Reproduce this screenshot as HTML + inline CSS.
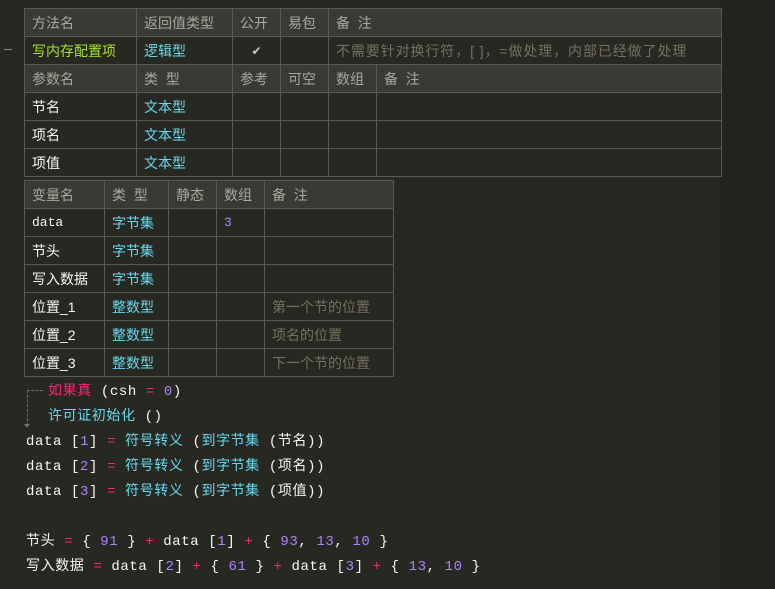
<!DOCTYPE html>
<html><head><meta charset="utf-8"><style>
body{margin:0;width:775px;height:589px;background:#272822;position:relative;overflow:hidden;font-family:"Liberation Mono","Noto Sans CJK SC",monospace;font-size:13.5px;color:#f8f8f2}
.rd{position:absolute;left:720px;top:0;width:55px;height:589px;background:#22221e}
table{position:absolute;border-collapse:collapse;table-layout:fixed}
td{border:1px solid #5b5a52;height:27px;padding:0 0 0 7px;white-space:nowrap;overflow:hidden;font-family:"Liberation Sans","Noto Sans CJK SC",sans-serif;font-size:14px}
tr.h td{background:#3a3933;color:#a9a89d}
.c{color:#66d9ef}.g{color:#a6e22e}.p{color:#ae81ff}.r{color:#f92672}.m{color:#75715e}.w{color:#f8f8f2}
.mono{font-family:"Liberation Mono","Noto Sans CJK SC",monospace;font-size:13px}
.ln{position:absolute;left:26px;white-space:pre;line-height:18px;font-size:14px;letter-spacing:0.6px}
</style></head><body>
<div class="rd"></div>
<div style="position:absolute;left:4px;top:49px;width:8px;height:1px;background:#8a8a80"></div>
<table style="left:24px;top:8px;width:697px">
<colgroup><col style="width:112px"><col style="width:96px"><col style="width:48px"><col style="width:48px"><col style="width:393px"></colgroup>
<tr class="h"><td>方法名</td><td>返回值类型</td><td>公开</td><td>易包</td><td>备&nbsp;&nbsp;注</td></tr>
<tr><td class="g">写内存配置项</td><td class="c">逻辑型</td><td style="text-align:center;padding:0;color:#c8c8c0;font-size:12px">✔</td><td></td><td class="m" style="letter-spacing:0.9px">不需要针对换行符，[ ]，=做处理，内部已经做了处理</td></tr>
</table>
<table style="left:24px;top:64px;width:697px">
<colgroup><col style="width:112px"><col style="width:96px"><col style="width:48px"><col style="width:48px"><col style="width:48px"><col style="width:345px"></colgroup>
<tr class="h"><td>参数名</td><td>类&nbsp;&nbsp;型</td><td>参考</td><td>可空</td><td>数组</td><td>备&nbsp;&nbsp;注</td></tr>
<tr><td>节名</td><td class="c">文本型</td><td></td><td></td><td></td><td></td></tr>
<tr><td>项名</td><td class="c">文本型</td><td></td><td></td><td></td><td></td></tr>
<tr><td>项值</td><td class="c">文本型</td><td></td><td></td><td></td><td></td></tr>
</table>
<table style="left:24px;top:180px;width:369px">
<colgroup><col style="width:80px"><col style="width:64px"><col style="width:48px"><col style="width:48px"><col style="width:129px"></colgroup>
<tr class="h"><td>变量名</td><td>类&nbsp;&nbsp;型</td><td>静态</td><td>数组</td><td>备&nbsp;&nbsp;注</td></tr>
<tr><td class="mono">data</td><td class="c">字节集</td><td></td><td class="p mono">3</td><td></td></tr>
<tr><td>节头</td><td class="c">字节集</td><td></td><td></td><td></td></tr>
<tr><td>写入数据</td><td class="c">字节集</td><td></td><td></td><td></td></tr>
<tr><td>位置_1</td><td class="c">整数型</td><td></td><td></td><td class="m">第一个节的位置</td></tr>
<tr><td>位置_2</td><td class="c">整数型</td><td></td><td></td><td class="m">项名的位置</td></tr>
<tr><td>位置_3</td><td class="c">整数型</td><td></td><td></td><td class="m">下一个节的位置</td></tr>
</table>
<div style="position:absolute;left:27px;top:390px;width:16px;height:0;border-top:1px dashed #75715e"></div>
<div style="position:absolute;left:27px;top:390px;width:0;height:36px;border-left:1px dashed #75715e"></div>
<div style="position:absolute;left:24px;top:424px;width:0;height:0;border-left:3px solid transparent;border-right:3px solid transparent;border-top:4px solid #75715e"></div>
<div class="ln" style="left:48px;top:383px"><span class="r">如果真</span> (csh <span class="r">=</span> <span class="p">0</span>)</div>
<div class="ln" style="left:48px;top:408px"><span class="c">许可证初始化</span> ()</div>
<div class="ln" style="top:433px">data [<span class="p">1</span>] <span class="r">=</span> <span class="c">符号转义</span> (<span class="c">到字节集</span> (节名))</div>
<div class="ln" style="top:458px">data [<span class="p">2</span>] <span class="r">=</span> <span class="c">符号转义</span> (<span class="c">到字节集</span> (项名))</div>
<div class="ln" style="top:483px">data [<span class="p">3</span>] <span class="r">=</span> <span class="c">符号转义</span> (<span class="c">到字节集</span> (项值))</div>
<div class="ln" style="top:533px">节头 <span class="r">=</span> { <span class="p">91</span> } <span class="r">+</span> data [<span class="p">1</span>] <span class="r">+</span> { <span class="p">93</span>, <span class="p">13</span>, <span class="p">10</span> }</div>
<div class="ln" style="top:558px">写入数据 <span class="r">=</span> data [<span class="p">2</span>] <span class="r">+</span> { <span class="p">61</span> } <span class="r">+</span> data [<span class="p">3</span>] <span class="r">+</span> { <span class="p">13</span>, <span class="p">10</span> }</div>
</body></html>
